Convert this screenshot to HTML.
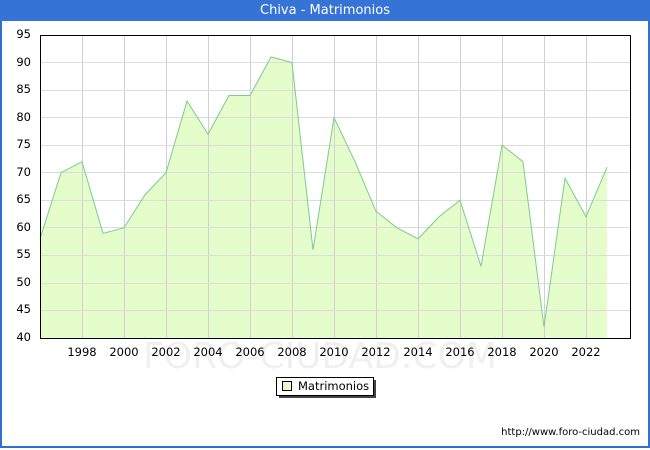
<!DOCTYPE html>
<html><head><style>
body{margin:0;width:650px;height:450px;overflow:hidden;font-family:"DejaVu Sans","Liberation Sans",sans-serif;}
.frame{position:absolute;left:0;top:0;width:646px;height:446px;border:2px solid #3070d0;border-top:none;background:#fff}
.hdr{position:absolute;left:0;top:0;width:650px;height:21px;background:#3574d6;color:#fff;font-size:13px;text-align:center;line-height:22px}
.yl{position:absolute;left:0;width:31px;text-align:right;font-size:11.5px;color:#000}
.xl{position:absolute;top:345px;width:40px;text-align:center;font-size:11.5px}
</style></head><body>
<div class="frame"></div>
<div class="hdr">Chiva - Matrimonios</div>
<svg style="position:absolute;left:0;top:0" width="650" height="450">
<text x="320" y="368" font-size="36" fill="#f0f0f0" text-anchor="middle" font-family="DejaVu Sans">FORO-CIUDAD.COM</text>
<g transform="translate(40,338) scale(21,-5.51)">
<polygon fill="#e5fccb" stroke="none" points="0,0 0,18 1,30 2,32 3,19 4,20 5,26 6,30 7,43 8,37 9,44 10,44 11,51 12,50 13,16 14,40 15,32 16,23 17,20 18,18 19,22 20,25 21,13 22,35 23,32 24,2 25,29 26,22 27,31 27,0"/>
</g>
<g stroke="#d0d0d0" stroke-width="1">
<line x1="82.5" y1="35" x2="82.5" y2="338"/><line x1="124.5" y1="35" x2="124.5" y2="338"/><line x1="166.5" y1="35" x2="166.5" y2="338"/><line x1="208.5" y1="35" x2="208.5" y2="338"/><line x1="250.5" y1="35" x2="250.5" y2="338"/><line x1="292.5" y1="35" x2="292.5" y2="338"/><line x1="334.5" y1="35" x2="334.5" y2="338"/><line x1="376.5" y1="35" x2="376.5" y2="338"/><line x1="418.5" y1="35" x2="418.5" y2="338"/><line x1="460.5" y1="35" x2="460.5" y2="338"/><line x1="502.5" y1="35" x2="502.5" y2="338"/><line x1="544.5" y1="35" x2="544.5" y2="338"/><line x1="586.5" y1="35" x2="586.5" y2="338"/>
</g>
<g stroke="#dcdcdc" stroke-width="1">
<line x1="40" y1="62.5" x2="630" y2="62.5"/><line x1="40" y1="90.5" x2="630" y2="90.5"/><line x1="40" y1="117.5" x2="630" y2="117.5"/><line x1="40" y1="145.5" x2="630" y2="145.5"/><line x1="40" y1="172.5" x2="630" y2="172.5"/><line x1="40" y1="200.5" x2="630" y2="200.5"/><line x1="40" y1="227.5" x2="630" y2="227.5"/><line x1="40" y1="255.5" x2="630" y2="255.5"/><line x1="40" y1="283.5" x2="630" y2="283.5"/><line x1="40" y1="310.5" x2="630" y2="310.5"/>
</g>
<g transform="translate(40,338) scale(21,-5.51)">
<polyline fill="none" stroke="#7ccc8e" stroke-width="1" vector-effect="non-scaling-stroke" points="0,18 1,30 2,32 3,19 4,20 5,26 6,30 7,43 8,37 9,44 10,44 11,51 12,50 13,16 14,40 15,32 16,23 17,20 18,18 19,22 20,25 21,13 22,35 23,32 24,2 25,29 26,22 27,31"/>
</g>
<rect x="40.5" y="35.5" width="590" height="303" fill="none" stroke="#000" stroke-width="1"/>
<rect x="279" y="380" width="97" height="18" fill="#444"/>
<rect x="276.5" y="377.5" width="97" height="18" fill="#fff" stroke="#000"/>
<rect x="282.5" y="381.5" width="9" height="9" fill="#e5fccb" stroke="#000"/>
</svg>
<div style="position:absolute;left:298px;top:379px;font-size:11.5px">Matrimonios</div>
<div class="yl" style="top:27px">95</div><div class="yl" style="top:55px">90</div><div class="yl" style="top:82px">85</div><div class="yl" style="top:110px">80</div><div class="yl" style="top:137px">75</div><div class="yl" style="top:165px">70</div><div class="yl" style="top:192px">65</div><div class="yl" style="top:220px">60</div><div class="yl" style="top:247px">55</div><div class="yl" style="top:275px">50</div><div class="yl" style="top:302px">45</div><div class="yl" style="top:330px">40</div>
<div class="xl" style="left:62px">1998</div><div class="xl" style="left:104px">2000</div><div class="xl" style="left:146px">2002</div><div class="xl" style="left:188px">2004</div><div class="xl" style="left:230px">2006</div><div class="xl" style="left:272px">2008</div><div class="xl" style="left:314px">2010</div><div class="xl" style="left:356px">2012</div><div class="xl" style="left:398px">2014</div><div class="xl" style="left:440px">2016</div><div class="xl" style="left:482px">2018</div><div class="xl" style="left:524px">2020</div><div class="xl" style="left:566px">2022</div>
<div style="position:absolute;right:10px;top:427px;font-size:10px">http://www.foro-ciudad.com</div>
</body></html>
